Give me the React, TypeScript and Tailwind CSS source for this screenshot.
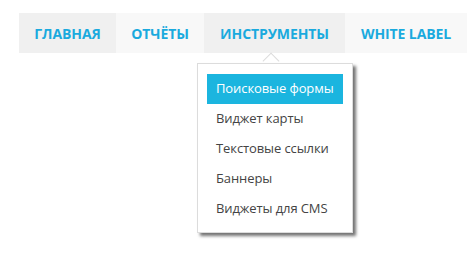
import React from "react";

const navItems = [
  { label: "ГЛАВНАЯ", bg: "bg-[#f0f0f0]", w: "w-[97px]" },
  { label: "ОТЧЁТЫ", bg: "bg-[#f8f8f8]", w: "w-[88px]" },
  { label: "ИНСТРУМЕНТЫ", bg: "bg-[#f0f0f0]", w: "w-[141px]" },
  { label: "WHITE LABEL", bg: "bg-[#f8f8f8]", w: "w-[122px]" },
];

const menu = ["Поисковые формы", "Виджет карты", "Текстовые ссылки", "Баннеры", "Виджеты для CMS"];

export default function App() {
  return (
    <div className="w-[476px] h-[257px] bg-white pl-[19px] pt-[13px]" style={{ fontFamily: '"Open Sans", "Noto Sans", sans-serif' }}>
      <div className="flex h-[40px]">
        {navItems.map((it, i) => (
          <div key={i} className={`relative flex items-center justify-center ${it.bg} ${it.w}`}>
            <span className="text-[14px] font-bold text-[#1aaade] tracking-[-0.1px]">{it.label}</span>
            {i === 2 && (
              <div className="absolute left-[-7px] top-[50px] w-[156px] z-10">
                <div className="absolute left-[68px] top-[-8px] w-[12px] h-[12px] rotate-45 bg-white border-l border-t border-[#dcdcdc]" />
                <div className="relative bg-white border border-[#dcdcdc] shadow-[3px_3px_3px_rgba(0,0,0,0.55)] pt-[10px] pb-[8px] px-[9px]">
                  {menu.map((m, j) => (
                    <div
                      key={j}
                      className={`h-[30px] flex items-center pl-[9px] text-[13px] tracking-[-0.1px] ${j === 0 ? "bg-[#1bb5df] text-white" : "text-[#444]"}`}
                    >
                      {m}
                    </div>
                  ))}
                </div>
              </div>
            )}
          </div>
        ))}
      </div>
    </div>
  );
}
